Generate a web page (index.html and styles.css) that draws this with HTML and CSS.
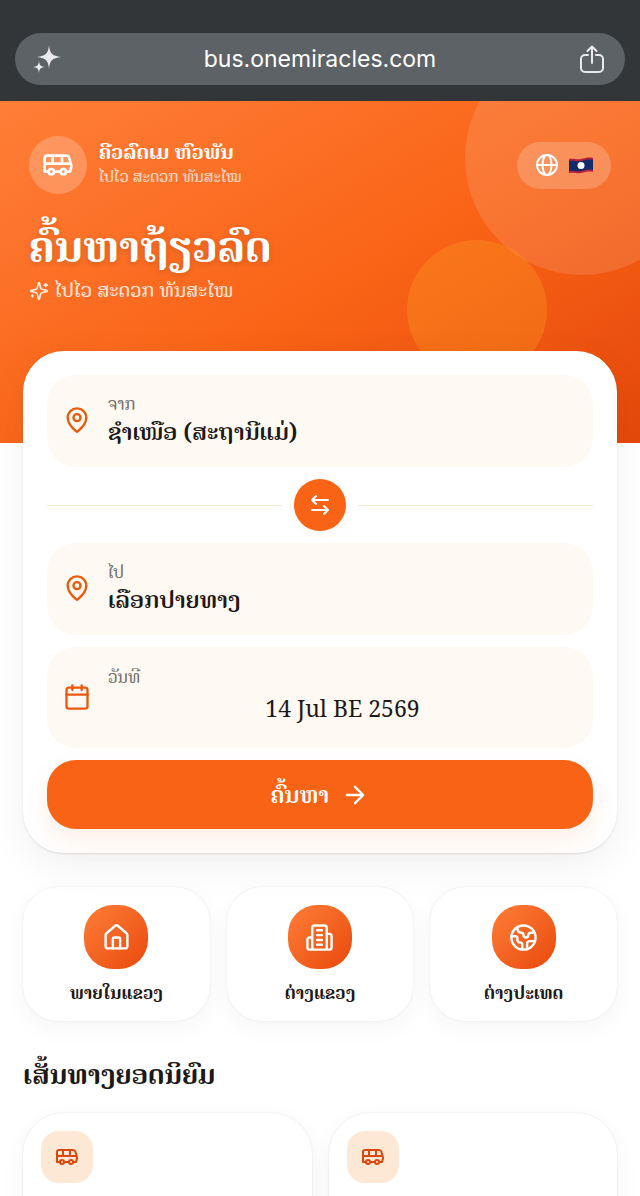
FILE: index.html
```html
<!DOCTYPE html>
<html lang="lo">
<head>
  <meta charset="UTF-8">
  <meta name="viewport" content="width=device-width, initial-scale=1.0">
  <title>ຄົ້ນຫາຖ້ຽວລົດ</title>
  <link rel="stylesheet" href="styles.css">
</head>
<body>
  <!-- shared icons -->
  <svg class="sprite" aria-hidden="true">
    <symbol id="i-bus" viewBox="0 0 24 24">
      <path d="M8 5v6M15 5v6M2 11h19.600M18 17h3s.5-1.700.8-2.800c.1-.4.2-.8.2-1.200 0-.4-.1-.8-.2-1.200l-1.400-5C20.100 5.800 19.100 5 18 5H4a2 2 0 0 0-2 2v10h3M9 17h5"/>
      <circle cx="7" cy="17" r="2"/>
      <circle cx="16" cy="17" r="2"/>
    </symbol>
    <symbol id="i-pin" viewBox="0 0 24 24">
      <path d="M20 10c0 4.993-5.539 10.193-7.399 11.799a1 1 0 0 1-1.202 0C9.539 20.193 4 14.993 4 10a8 8 0 0 1 16 0"/>
      <circle cx="12" cy="10" r="3"/>
    </symbol>
  </svg>

  <div class="browser-bar">
    <div class="address">
      <button class="address-btn" aria-label="Assistant">
        <svg viewBox="0 0 32 32" width="32" height="32" fill="#e8eaed">
          <path d="M17 2c.8 8.500 3 10.900 12 12-9 1.100-11.200 3.500-12 12-.8-8.500-3-10.900-12-12 9-1.100 11.200-3.500 12-12z"/>
          <path d="M7 18c.5 4.300 1.800 5.500 6 6-4.200.5-5.500 1.700-6 6-.5-4.300-1.800-5.500-6-6 4.200-.5 5.500-1.700 6-6z"/>
        </svg>
      </button>
      <span class="address-url">bus.onemiracles.com</span>
      <button class="address-btn" aria-label="Share">
        <svg class="line" viewBox="0 0 32 32" width="32" height="32">
          <path d="M12 12H9a4 4 0 0 0-4 4v9a4 4 0 0 0 4 4h14a4 4 0 0 0 4-4v-9a4 4 0 0 0-4-4h-3M16 20V4M11.500 8 16 3.500 20.500 8"/>
        </svg>
      </button>
    </div>
  </div>

  <main class="page">
    <header class="hero">
      <div class="bubble bubble-light"></div>
      <div class="bubble bubble-amber"></div>

      <div class="topbar">
        <div class="logo">
          <svg class="line" width="32" height="32"><use href="#i-bus"/></svg>
        </div>
        <div class="brand">
          <div class="brand-name">ຄີວລົດເມ ຫົວພັນ</div>
          <div class="brand-sub">ໄປໄວ ສະດວກ ທັນສະໄໝ</div>
        </div>
        <button class="lang" aria-label="ພາສາ">
          <svg class="line" viewBox="0 0 24 24" width="24" height="24">
            <circle cx="12" cy="12" r="10"/>
            <ellipse cx="12" cy="12" rx="4.500" ry="10"/>
            <path d="M2 12h20"/>
          </svg>
          <svg viewBox="0 0 24 17" width="24" height="17">
            <path fill="#b3203f" d="M0 2c5-1 8 1 12 0s8-2 12-1v14c-4-1-8 0-12 1s-7-1-12 0z"/>
            <path fill="#12296b" d="M0 4c5-1 8 1 12 0s8-2 12-1v10c-4-1-8 0-12 1s-7-1-12 0z"/>
            <circle cx="12" cy="8.500" r="3.500" fill="#fff"/>
          </svg>
        </button>
      </div>

      <h1>ຄົ້ນຫາຖ້ຽວລົດ</h1>
      <p class="tagline">
        <svg class="line" viewBox="0 0 24 24" width="20" height="20">
          <path d="M9.937 15.500A2 2 0 0 0 8.500 14.063l-6.135-1.582a.5.5 0 0 1 0-.962L8.500 9.936A2 2 0 0 0 9.937 8.500l1.582-6.135a.5.5 0 0 1 .963 0L14.063 8.500A2 2 0 0 0 15.500 9.937l6.135 1.581a.5.5 0 0 1 0 .964L15.500 14.063a2 2 0 0 0-1.437 1.437l-1.582 6.135a.5.5 0 0 1-.963 0z"/>
          <path d="M20 3v4M22 5h-4M4 17v2M5 18H3"/>
        </svg>
        ໄປໄວ ສະດວກ ທັນສະໄໝ
      </p>
    </header>

    <form class="search">
      <button type="button" class="field">
        <svg class="line" width="28" height="28"><use href="#i-pin"/></svg>
        <span class="field-text">
          <span class="field-label">ຈາກ</span>
          <span class="field-value">ຊຳເໜືອ (ສະຖານີແມ່)</span>
        </span>
      </button>

      <div class="swap-row">
        <button type="button" class="swap" aria-label="ສະຫຼັບ">
          <svg class="line" viewBox="0 0 24 24" width="24" height="24">
            <path d="M20 7H4M8 3 4 7l4 4M4 17h16M16 13l4 4-4 4"/>
          </svg>
        </button>
      </div>

      <button type="button" class="field">
        <svg class="line" width="28" height="28"><use href="#i-pin"/></svg>
        <span class="field-text">
          <span class="field-label">ໄປ</span>
          <span class="field-value">ເລືອກປາຍທາງ</span>
        </span>
      </button>

      <div class="field field-date">
        <svg class="line" viewBox="0 0 24 24" width="28" height="28">
          <rect x="3" y="4" width="18" height="18" rx="2"/>
          <path d="M3 10h18M8 2v4M16 2v4"/>
        </svg>
        <div class="field-text">
          <label class="field-label" for="date">ວັນທີ</label>
          <input id="date" type="text" value="14 Jul BE 2569" readonly>
        </div>
      </div>

      <button type="submit" class="submit">
        ຄົ້ນຫາ
        <svg class="line" viewBox="0 0 24 24" width="28" height="28">
          <path d="M5 12h14M12 5l7 7-7 7"/>
        </svg>
      </button>
    </form>

    <nav class="categories">
      <a class="category" href="#local">
        <span class="category-icon">
          <svg class="line" viewBox="0 0 24 24" width="29" height="29">
            <path d="M15 21v-8a1 1 0 0 0-1-1h-4a1 1 0 0 0-1 1v8"/>
            <path d="M3 10a2 2 0 0 1 .709-1.528l7-5.999a2 2 0 0 1 2.582 0l7 5.999A2 2 0 0 1 21 10v9a2 2 0 0 1-2 2H5a2 2 0 0 1-2-2z"/>
          </svg>
        </span>
        ພາຍໃນແຂວງ
      </a>
      <a class="category" href="#province">
        <span class="category-icon">
          <svg class="line" viewBox="0 0 24 24" width="29" height="29">
            <path d="M6 22V4a2 2 0 0 1 2-2h8a2 2 0 0 1 2 2v18zM6 12H4a2 2 0 0 0-2 2v6a2 2 0 0 0 2 2h2M18 9h2a2 2 0 0 1 2 2v9a2 2 0 0 1-2 2h-2M10 6h4M10 10h4M10 14h4M10 18h4"/>
          </svg>
        </span>
        ຕ່າງແຂວງ
      </a>
      <a class="category" href="#abroad">
        <span class="category-icon">
          <svg class="line" viewBox="0 0 24 24" width="29" height="29">
            <circle cx="12" cy="12" r="10"/>
            <path d="M21.540 15H17a2 2 0 0 0-2 2v4.540M7 3.340V5a3 3 0 0 0 3 3 2 2 0 0 1 2 2c0 1.100.9 2 2 2a2 2 0 0 0 2-2c0-1.100.9-2 2-2h3.170M11 21.950V18a2 2 0 0 0-2-2 2 2 0 0 1-2-2v-1a2 2 0 0 0-2-2H2.050"/>
          </svg>
        </span>
        ຕ່າງປະເທດ
      </a>
    </nav>

    <section class="popular">
      <h2>ເສັ້ນທາງຍອດນິຍົມ</h2>
      <div class="routes">
        <article class="route">
          <div class="route-icon"><svg class="line" width="24" height="24"><use href="#i-bus"/></svg></div>
        </article>
        <article class="route">
          <div class="route-icon"><svg class="line" width="24" height="24"><use href="#i-bus"/></svg></div>
        </article>
      </div>
    </section>
  </main>
</body>
</html>
```
FILE: styles.css
```css
* {
  box-sizing: border-box;
}
body {
  margin: 0;
  height: 100vh;
  display: flex;
  flex-direction: column;
  overflow: hidden;
  font-family: 'Noto Serif Lao', 'Noto Serif', 'Noto Sans Lao', 'Liberation Serif', serif;
  background: #fff;
  color: #1c1917;
}
button, input {
  font: inherit;
  color: inherit;
  border: none;
  background: none;
  padding: 0;
}
button {
  cursor: pointer;
}
svg {
  display: block;
  flex: none;
}
.sprite {
  position: absolute;
  width: 0;
  height: 0;
}
.line {
  fill: none;
  stroke: currentColor;
  stroke-width: 2;
  stroke-linecap: round;
  stroke-linejoin: round;
}

/* browser bar */
.browser-bar {
  flex: none;
  background: #323639;
  padding: 33px 15px 16px;
}
.address {
  display: flex;
  align-items: center;
  justify-content: space-between;
  height: 52px;
  padding: 0 17px;
  border-radius: 26px;
  background: #5d6266;
  color: #e8eaed;
}
.address-url {
  font-family: Inter, sans-serif;
  font-size: 23px;
  color: #fff;
}

/* hero */
.page {
  flex: 1;
  overflow-y: auto;
  scrollbar-width: none;
}
.hero {
  position: relative;
  overflow: hidden;
  height: 342px;
  padding: 35px 29px;
  color: #fff;
  background: linear-gradient(150deg, #ff7e38 0%, #f96316 55%, #e5480b 100%);
}
.bubble {
  position: absolute;
  border-radius: 50%;
}
.bubble-light {
  width: 234px;
  height: 234px;
  top: -60px;
  right: -59px;
  background: rgba(255, 255, 255, 0.12);
}
.bubble-amber {
  width: 140px;
  height: 140px;
  top: 139px;
  right: 93px;
  background: rgba(251, 161, 36, 0.3);
}
.topbar {
  position: relative;
  display: flex;
  align-items: center;
  gap: 12px;
}
.logo {
  display: flex;
  align-items: center;
  justify-content: center;
  width: 58px;
  height: 58px;
  border-radius: 50%;
  background: rgba(255, 255, 255, 0.22);
}
.brand {
  flex: 1;
}
.brand-name {
  font-size: 20px;
  line-height: 24px;
  font-weight: 700;
}
.brand-sub {
  font-size: 16px;
  line-height: 24px;
  opacity: 0.75;
}
.lang {
  display: flex;
  align-items: center;
  gap: 10px;
  height: 47px;
  padding: 0 18px;
  border-radius: 24px;
  color: #fff;
  background: rgba(255, 255, 255, 0.2);
}
h1 {
  position: relative;
  margin: 23px 0 0;
  font-size: 42px;
  line-height: 62px;
  font-weight: 700;
  text-shadow: 0 2px 6px rgba(0, 0, 0, 0.15);
}
.tagline {
  position: relative;
  display: flex;
  align-items: center;
  gap: 6px;
  margin: 0;
  font-size: 20px;
  line-height: 24px;
  color: rgba(255, 255, 255, 0.85);
}

/* search card */
.search {
  position: relative;
  display: flex;
  flex-direction: column;
  gap: 12px;
  margin: -92px 23px 0;
  padding: 24px;
  border-radius: 41px;
  background: #fff;
  box-shadow: 0 1px 2px rgba(0, 0, 0, 0.1), 0 12px 40px rgba(0, 0, 0, 0.06);
}
.field {
  display: flex;
  align-items: center;
  gap: 17px;
  min-height: 92px;
  padding: 11px 16px 13px;
  border-radius: 29px;
  background: #fff9f3;
  text-align: left;
}
.field .line {
  color: #ea580c;
}
.field-text {
  flex: 1;
  display: flex;
  flex-direction: column;
}
.field-label {
  font-size: 17px;
  line-height: 24px;
  color: #78716c;
}
.field-value {
  font-size: 23px;
  line-height: 32px;
  font-weight: 600;
}
.field-date {
  min-height: 101px;
}
.field-date input {
  width: 100%;
  font-size: 23px;
  line-height: 40px;
  text-align: center;
}
.swap-row {
  display: flex;
  align-items: center;
  gap: 12px;
}
.swap-row::before,
.swap-row::after {
  content: '';
  flex: 1;
  height: 1px;
  background: #f5e6cc;
}
.swap {
  display: flex;
  align-items: center;
  justify-content: center;
  width: 52px;
  height: 52px;
  border-radius: 50%;
  background: #f96316;
  color: #fff;
  box-shadow: 0 4px 12px rgba(249, 99, 22, 0.05);
}
.submit {
  display: flex;
  align-items: center;
  justify-content: center;
  gap: 12px;
  height: 69px;
  border-radius: 29px;
  background: #f96316;
  color: #fff;
  font-size: 23px;
  font-weight: 600;
  box-shadow: 0 12px 24px rgba(249, 99, 22, 0.1);
}

/* categories */
.categories {
  display: grid;
  grid-template-columns: repeat(3, 1fr);
  gap: 17px;
  margin: 34px 23px 0;
}
.category {
  display: flex;
  flex-direction: column;
  align-items: center;
  gap: 12px;
  padding: 18px 12px 16px;
  border-radius: 35px;
  background: #fff;
  color: inherit;
  font-size: 17px;
  line-height: 24px;
  font-weight: 700;
  text-decoration: none;
  box-shadow: 0 0 2px rgba(0, 0, 0, 0.1), 0 8px 24px rgba(0, 0, 0, 0.04);
}
.category-icon {
  display: flex;
  align-items: center;
  justify-content: center;
  width: 64px;
  height: 64px;
  border-radius: 29px;
  color: #fff;
  background: linear-gradient(135deg, #ff7e38, #e8490c);
}

/* popular routes */
.popular {
  margin: 34px 23px 0;
}
h2 {
  margin: 0 0 18px;
  font-size: 26px;
  line-height: 40px;
  font-weight: 700;
}
.routes {
  display: grid;
  grid-template-columns: repeat(2, 1fr);
  gap: 17px;
}
.route {
  min-height: 160px;
  padding: 18px;
  border-radius: 41px;
  background: #fff;
  box-shadow: 0 0 2px rgba(0, 0, 0, 0.12), 0 8px 24px rgba(0, 0, 0, 0.05);
}
.route-icon {
  display: flex;
  align-items: center;
  justify-content: center;
  width: 52px;
  height: 52px;
  border-radius: 18px;
  background: #fde8d5;
  color: #d9480f;
}
```
